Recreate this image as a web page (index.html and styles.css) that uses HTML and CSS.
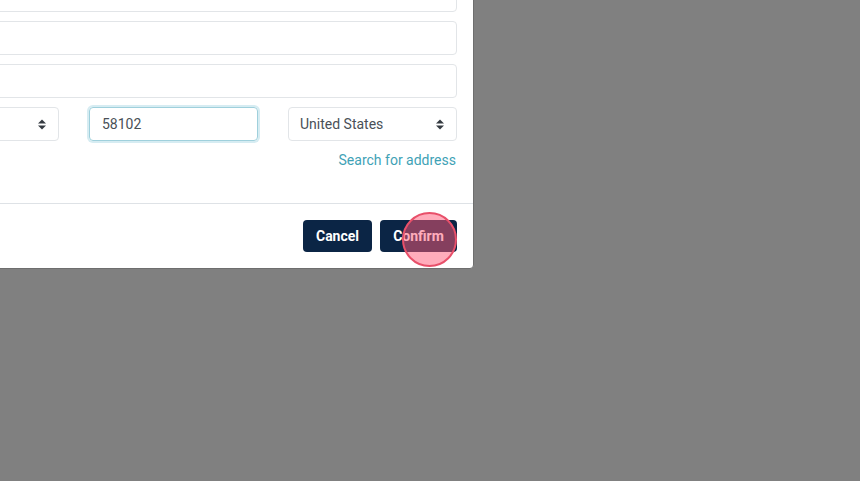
FILE: index.html
```html
<!DOCTYPE html>
<html>
<head>
<meta charset="utf-8">
<link rel="stylesheet" href="styles.css">
</head>
<body>
<div class="modal">
  <div class="modal-body">
    <div class="field"></div>
    <div class="field"></div>
    <div class="field"></div>
    <div class="row">
      <div class="field select"><span class="val"></span><svg class="caret" width="8" height="11" viewBox="0 0 8 11"><path d="M0 4.5 L4 0.5 L8 4.5Z M0 6.5 L4 10.5 L8 6.5Z" fill="#343a40"/></svg></div>
      <div class="field focus"><span class="val">58102</span></div>
      <div class="field select"><span class="val">United States</span><svg class="caret" width="8" height="11" viewBox="0 0 8 11"><path d="M0 4.5 L4 0.5 L8 4.5Z M0 6.5 L4 10.5 L8 6.5Z" fill="#343a40"/></svg></div>
    </div>
    <div class="link-row"><a class="link">Search for address</a></div>
  </div>
  <div class="modal-footer">
    <button class="btn btn-cancel">Cancel</button>
    <button class="btn btn-confirm">Confirm</button>
  </div>
</div>
<div class="click-marker"></div>
</body>
</html>
```
FILE: styles.css
```css
html, body {
  margin: 0;
  padding: 0;
  height: 100%;
  overflow: hidden;
}
body {
  background: #808080;
  font-family: Roboto, "Liberation Sans", sans-serif;
  position: relative;
}
.modal {
  width: 602px;
  margin-left: -128px;
  margin-top: -40px;
  background: #fff;
  border: 1px solid #6e6e6e;
  border-radius: 4px;
  box-sizing: border-box;
}
.modal-body {
  padding: 17px 16px 16px 16px;
  display: flex;
  flex-direction: column;
  gap: 9px;
}
.field {
  height: 34px;
  box-sizing: border-box;
  border: 1px solid #e2e5e8;
  border-radius: 4px;
  display: flex;
  align-items: center;
  padding: 0 12px 0 11px;
  font-size: 14px;
  color: #495057;
}
.row {
  display: grid;
  grid-template-columns: 169px 169px 169px;
  column-gap: 30px;
  justify-content: end;
}
.select {
  justify-content: space-between;
  padding-right: 12px;
}
.focus {
  border-color: #9fd0dc;
  box-shadow: 0 0 0 2px #d6ecf2;
  padding-left: 12px;
}
.caret { display: block; }
.link-row {
  display: flex;
  justify-content: flex-end;
  height: 21px;
  align-items: center;
  margin-top: -1px;
  margin-bottom: 17px;
}
.link {
  color: #3fa2b6;
  font-size: 14px;
  margin-right: 1px;
}
.modal-footer {
  border-top: 1px solid #dee2e6;
  padding: 16px;
  display: flex;
  justify-content: flex-end;
  gap: 8px;
}
.btn {
  height: 32px;
  padding: 0 12px;
  border: none;
  border-radius: 4px;
  background: #0b2545;
  color: #fff;
  font-family: Roboto, "Liberation Sans", sans-serif;
  font-weight: bold;
  font-size: 14px;
}
.btn-cancel { width: 69px; }
.btn-confirm { width: 77px; }
.click-marker {
  position: absolute;
  left: 402px;
  top: 212px;
  width: 55px;
  height: 55px;
  box-sizing: border-box;
  border-radius: 50%;
  border: 2px solid #e8506a;
  background: rgba(255, 90, 120, 0.5);
}
```
